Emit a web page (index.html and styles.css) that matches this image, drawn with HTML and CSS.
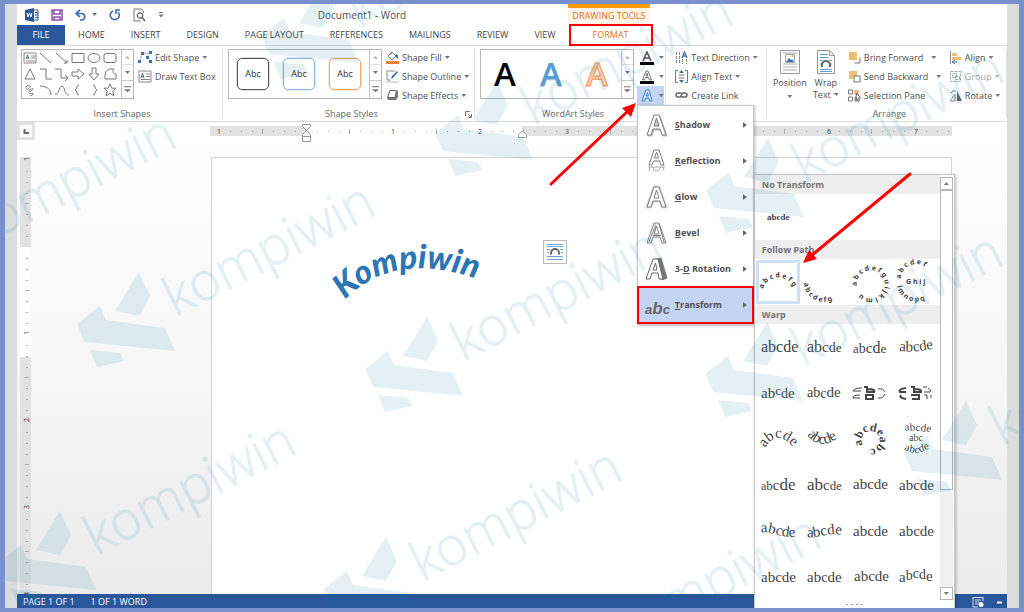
FILE: index.html
```html
<!DOCTYPE html>
<html lang="en">
<head>
<meta charset="utf-8">
<title>Document1 - Word</title>
<link rel="stylesheet" href="styles.css">
</head>
<body>
<svg class="defs" aria-hidden="true">
  <defs>
    <pattern id="hticks" width="87" height="10" patternUnits="userSpaceOnUse" x="96">
      <path d="M11.5 5v1M22.5 5v1M33.5 5v1M43.5 3v5M54.5 5v1M65.5 5v1M76.5 5v1" stroke="#aaa"/>
    </pattern>
    <pattern id="vticks" width="12" height="87" patternUnits="userSpaceOnUse" y="90">
      <path d="M6 11.5h2M6 22.5h2M6 33.5h2M5 43.5h4M6 54.5h2M6 65.5h2M6 76.5h2" stroke="#aaa"/>
    </pattern>
    <symbol id="mark" overflow="visible">
      <path d="M0 0 11 24 0 44-24 39ZM-39 34-33 48 26 56 36 79-54 70-62 52ZM-49 78-19 81-15 89-42 95Z"/>
      <text transform="translate(36 45) rotate(-27)">kompiwin</text>
    </symbol>
    <path id="arch" d="M8 30A16 16 0 0 1 38 28"/>
    <path id="arch-down" d="M3 24A19 19 0 0 0 43 22"/>
    <path id="ring" d="M10 27A14 14 0 1 1 13 34"/>
    <path id="btn-top" d="M8 20A15 15 0 0 1 38 20"/>
    <path id="btn-low" d="M4 27A19 17 0 0 0 43 23"/>
    <path id="w-arch" d="M10 32Q23 10 42 36"/>
    <path id="w-down" d="M6 19Q22 38 42 17"/>
    <path id="rise" d="M6 27Q24 29 44 24"/>
    <path id="wave1" d="M6 25C16 22 28 32 44 28"/>
    <path id="wave2" d="M6 29C16 31 26 24 44 27"/>
    <path id="w-ring" d="M16 29A9 9 0 1 1 24 33"/>
  </defs>
</svg>

<div class="window">
  <header class="titlebar">
    <div class="quick">
      <svg width="14" height="14" viewBox="0 0 14 14"><path d="M7 2h6v10H7M10 4.500h3M10 7h3M10 9.500h3" fill="#fff" stroke="#2a579a"/><path d="M0 2 9 0v14L0 12Z" fill="#2a579a"/><path d="m2 5 1 4 1.500-4L6 9l1-4" fill="none" stroke="#fff"/></svg>
      <button aria-label="Save"><svg width="12" height="12" viewBox="0 0 12 12"><path d="M1 1h10v10H1ZM3 1v4h6V1M3 11V8h6v3" fill="none" stroke="#8b4fb0" stroke-width="1.500"/></svg></button>
      <button aria-label="Undo"><svg width="12" height="12" viewBox="0 0 12 12"><path d="M5 1 1 4.500 5 8M1.500 4.500H7a3.300 3.300 0 0 1 0 6.500H5" fill="none" stroke="#3c70b5" stroke-width="1.700"/></svg><i class="caret"></i></button>
      <button aria-label="Redo"><svg width="12" height="12" viewBox="0 0 12 12"><path d="M4 2a4.500 4.500 0 1 0 5 1M7 5V1h4" fill="none" stroke="#3c70b5" stroke-width="1.600"/></svg></button>
      <button aria-label="Print preview"><svg width="13" height="14" viewBox="0 0 13 14"><path d="M10.500 5V3L8 1H1v12h7" fill="none" stroke="#777"/><circle cx="7" cy="7.500" r="2.700" fill="none" stroke="#666" stroke-width="1.300"/><path d="m9 9.500 3 3.500" stroke="#666" stroke-width="1.700"/></svg></button>
      <button aria-label="Customize"><svg width="6" height="6" viewBox="0 0 6 6"><path d="M1 .5h4" stroke="#777"/><path d="M.5 2.500h5L3 5.500Z" fill="#777"/></svg></button>
    </div>
    <h1>Document1 - Word</h1>
    <div class="context">DRAWING TOOLS</div>
  </header>

  <nav class="tabs">
    <button class="file">FILE</button>
    <button>HOME</button>
    <button>INSERT</button>
    <button>DESIGN</button>
    <button>PAGE LAYOUT</button>
    <button>REFERENCES</button>
    <button>MAILINGS</button>
    <button>REVIEW</button>
    <button>VIEW</button>
    <button class="format">FORMAT</button>
  </nav>

  <div class="ribbon">
    <section class="group g-insert">
      <div class="tools">
        <div class="gallery">
          <div class="shapes">
            <svg viewBox="0 0 16 16"><path d="M2 3h12v10H2ZM9 6h4M9 8h4M4 11h9" fill="none" stroke="#888"/><path d="m4 9 1.500-4L7 9M4.500 8h2" fill="none" stroke="#3c70b5"/></svg>
            <svg viewBox="0 0 16 16"><path d="m2 3 11 10"/></svg>
            <svg viewBox="0 0 16 16"><path d="m2 3 11 10M13 10v3h-3"/></svg>
            <svg viewBox="0 0 16 16"><path d="M2 3.500h12v9H2Z"/></svg>
            <svg viewBox="0 0 16 16"><ellipse cx="8" cy="8" rx="6" ry="4.500"/></svg>
            <svg viewBox="0 0 16 16"><rect x="2" y="3.500" width="12" height="9" rx="2"/></svg>
            <svg viewBox="0 0 16 16"><path d="m8 3 5 10H3Z"/></svg>
            <svg viewBox="0 0 16 16"><path d="M2 3h6v10h6"/></svg>
            <svg viewBox="0 0 16 16"><path d="M1 3h6v9h7M11 9l3 3-3 3"/></svg>
            <svg viewBox="0 0 16 16"><path d="M2 6h6V3l6 5-6 5v-3H2Z"/></svg>
            <svg viewBox="0 0 16 16"><path d="M6 2h4v6h3l-5 6-5-6h3Z"/></svg>
            <svg viewBox="0 0 16 16"><path d="M7 3h5c-2 2-1 5 2 5v5H3V9c0-3 2-5 4-6Z"/></svg>
            <svg viewBox="0 0 16 16"><path d="M5 7c-3-2 1-5 3-3 2 1-4 3-2 4s5-3 5-1-5 2-4 4 5-1 4 1-2 1-3 2"/></svg>
            <svg viewBox="0 0 16 16"><path d="M2 4c6 0 11 3 11 9"/></svg>
            <svg viewBox="0 0 16 16"><path d="M1 12c4 2 4-8 7-8s2 9 7 9"/></svg>
            <svg viewBox="0 0 16 16"><path d="M9 3q-2 0-2 2t-2 3q2 1 2 3t2 2"/></svg>
            <svg viewBox="0 0 16 16"><path d="M7 3q2 0 2 2t2 3q-2 1-2 3t-2 2"/></svg>
            <svg viewBox="0 0 16 16"><path d="m8 2 1.800 4.200H14l-3.300 3L12 14l-4-2.800L4 14l1.300-4.800L2 6.200h4.200Z"/></svg>
          </div>
          <div class="spin"><button aria-label="Up" disabled><i class="caret up"></i></button><button aria-label="Down"><i class="caret"></i></button><button aria-label="More"><i class="caret more"></i></button></div>
        </div>
        <div class="commands">
          <button><svg width="14" height="13" viewBox="0 0 14 13"><path d="m2 10 2-7 8-1-3 4 3 5" fill="none" stroke="#7a9cc8" stroke-dasharray="2 1"/><path d="M0 9h3v3H0ZM3 1h3v3H3ZM11 0h3v3h-3ZM8 5h3v3H8ZM11 9h3v3h-3Z" fill="#3c70b5"/></svg>Edit Shape<i class="caret"></i></button>
          <button><svg width="14" height="13" viewBox="0 0 14 13"><path d="M1 1h12v11H1ZM8 4h4M8 6.500h4M3 9.500h9" fill="none" stroke="#888"/><path d="m3 8 1.500-5L6 8M3.500 6.500h2" fill="none" stroke="#3c70b5"/></svg>Draw Text Box</button>
        </div>
      </div>
      <h2>Insert Shapes</h2>
    </section>

    <section class="group g-styles">
      <div class="tools">
        <div class="gallery">
          <div class="swatches"><button class="dark">Abc</button><button class="blue">Abc</button><button class="orange">Abc</button></div>
          <div class="spin"><button aria-label="Up" disabled><i class="caret up"></i></button><button aria-label="Down"><i class="caret"></i></button><button aria-label="More"><i class="caret more"></i></button></div>
        </div>
        <div class="commands">
          <button><svg width="13" height="13" viewBox="0 0 13 13"><path d="M0 10h13v3H0Z" fill="#ed7d31"/><path d="m6 1 4 4-4 4-4-4ZM5 4V1" fill="#fff" stroke="#777"/><path d="M10 3c2 0 2 2 2 5l-2-2Z" fill="#3c70b5"/></svg>Shape Fill<i class="caret"></i></button>
          <button><svg width="13" height="13" viewBox="0 0 13 13"><path d="M0 11h13v2H0Z" fill="#ddd"/><path d="M9 1H1v9h4" fill="none" stroke="#888"/><path d="m5 9 1-3 5-5 1 1-5 6Z" fill="#3c70b5"/></svg>Shape Outline<i class="caret"></i></button>
          <button><svg width="13" height="13" viewBox="0 0 13 13"><path d="M4 2h8v6l-2 3H2L1 9Z" fill="#777"/><path d="M4 1.500h6.500L9 8.500H1.500Z" fill="#fff" stroke="#666"/></svg>Shape Effects<i class="caret"></i></button>
        </div>
      </div>
      <h2>Shape Styles</h2>
      <button class="launcher" aria-label="Format shape"><svg width="7" height="7" viewBox="0 0 7 7"><path d="M.5 5V.5H5M3 3l3 3M6.500 3v3.500H3" fill="none" stroke="#777"/></svg></button>
    </section>

    <section class="group g-wordart">
      <div class="tools">
        <div class="gallery">
          <div class="letters"><button class="black">A</button><button class="blue">A</button><button class="orange">A</button></div>
          <div class="spin"><button aria-label="Up" disabled><i class="caret up"></i></button><button aria-label="Down"><i class="caret"></i></button><button aria-label="More"><i class="caret more"></i></button></div>
        </div>
        <div class="text-tools">
          <button aria-label="Text Fill"><svg width="14" height="14" viewBox="0 0 14 14"><path d="M0 11h14v3H0Z"/><path d="m3 10 4-9 4 9M4.500 7h5" fill="none" stroke="#555" stroke-width="1.600"/></svg><i class="caret"></i></button>
          <button aria-label="Text Outline"><svg width="14" height="14" viewBox="0 0 14 14"><path d="M0 11h14v3H0Z"/><path d="m2.500 10 3.500-9h2l3.500 9h-2l-1-2.500h-3l-1 2.500ZM6 6h2L7 3Z" fill="#fff" stroke="#777"/></svg><i class="caret"></i></button>
          <div class="effects">
            <button class="open" aria-label="Text Effects" aria-expanded="true"><svg width="14" height="14" viewBox="0 0 14 14"><path d="M2 12 6 1h3l3 11h-2.500L9 9H5.500l-1 3ZM6 7h2.500L7.500 3.500Z" fill="#e8f1fb" stroke="#3f7dc4"/></svg><i class="caret"></i></button>
            <div class="menu" role="menu">
              <button role="menuitem"><svg viewBox="0 0 24 24"><path class="sh" d="M3 23 10 3h5l7 20h-4l-2-6h-7l-2 6Z"/><path d="M2 22 9 2h5l7 20h-4l-2-6H8l-2 6ZM9 13h5L11.500 5Z"/></svg><span><u>S</u>hadow</span><i class="next"></i></button>
              <button role="menuitem"><svg viewBox="0 0 24 24"><path d="M4 16 9 1h5l5 15h-3l-1.500-4h-6L7 16ZM9.500 9h4l-2-6Z"/><path class="faded" d="M3 18h17M5 18l-1 4M8 18q0 4 3.500 4t3.500-4M18 18l1 4"/></svg><span><u>R</u>eflection</span><i class="next"></i></button>
              <button role="menuitem"><svg viewBox="0 0 24 24"><path class="glow" d="M2 22 9 2h5l7 20h-4l-2-6H8l-2 6Z"/><path d="M2 22 9 2h5l7 20h-4l-2-6H8l-2 6ZM9 13h5L11.500 5Z"/></svg><span><u>G</u>low</span><i class="next"></i></button>
              <button role="menuitem"><svg viewBox="0 0 24 24"><path d="M2 22 9 2h5l7 20h-4l-2-6H8l-2 6ZM9 13h5L11.500 5Z"/><path d="M4 21 11 3.500M14 3l5 18M8 14.500h8"/></svg><span><u>B</u>evel</span><i class="next"></i></button>
              <button role="menuitem"><svg viewBox="0 0 24 24"><path class="solid" d="m11 2 5-1 6 20-5 2Z"/><path class="face" d="M1 22 8 2h5l5 20h-4l-1-6H7l-2 6ZM8 13h4L10.500 6Z"/></svg><span>3-<u>D</u> Rotation</span><i class="next"></i></button>
              <div class="branch">
                <button role="menuitem" class="current" aria-expanded="true"><svg viewBox="0 0 24 24"><text class="abc" x="0" y="21">a<tspan font-size="17">b</tspan>c</text></svg><span><u>T</u>ransform</span><i class="next"></i></button>
                <div class="submenu">
                  <div class="picker">
                    <div class="list">
                      <h3>No Transform</h3>
                      <div class="cells plain"><button><svg viewBox="0 0 46 46"><text x="12" y="26">abcde</text></svg></button></div>
                      <h3>Follow Path</h3>
                      <div class="cells path">
                        <button class="selected"><svg viewBox="0 0 46 46"><text><textPath href="#arch">a b c d e f g</textPath></text></svg></button>
                        <button><svg viewBox="0 0 46 46"><text><textPath href="#arch-down">a b c d e f g</textPath></text></svg></button>
                        <button><svg viewBox="0 0 46 46"><text><textPath href="#ring">a b c d e f g u i j k l m u</textPath></text></svg></button>
                        <button><svg viewBox="0 0 46 46"><text><textPath href="#btn-top">a b c d e f</textPath></text><text x="13" y="25">G h i j</text><text><textPath href="#btn-low">l m n o p q</textPath></text></svg></button>
                      </div>
                      <h3>Warp</h3>
                      <div class="cells warp">
                        <button><svg viewBox="0 0 46 46"><text x="6" y="28" font-size="16">abcde</text></svg></button>
                        <button><svg viewBox="0 0 46 46"><text x="6" y="28" font-size="16">ab<tspan font-size="15">c</tspan><tspan font-size="14">d</tspan><tspan font-size="13">e</tspan></text></svg></button>
                        <button><svg viewBox="0 0 46 46"><text x="6" y="29" font-size="13">a<tspan font-size="14">b</tspan><tspan font-size="15">c</tspan><tspan font-size="16">d</tspan>e</text></svg></button>
                        <button><svg viewBox="0 0 46 46"><text font-size="15"><textPath href="#rise">abcde</textPath></text></svg></button>

                        <button><svg viewBox="0 0 46 46"><text x="6" y="28" font-size="15">ab<tspan font-size="13" dy="-3">c</tspan><tspan font-size="14" dy="3">d</tspan><tspan font-size="15">e</tspan></text></svg></button>
                        <button><svg viewBox="0 0 46 46"><text x="6" y="27" font-size="14">ab<tspan dy="1">c</tspan><tspan font-size="15" dy="-1">de</tspan></text></svg></button>
                        <button><svg viewBox="0 0 46 46"><g class="stretched"><path d="M15 18q-8 0-9 3h8M13 25q-8 0-7 3h7"/><path class="thick" d="M17 17h3v5h7q2-3-7-3M18 25h8v4h-7v-4"/><path d="M31 19q5-1 7 3M31 28q5 1 7-4"/></g></svg></button>
                        <button><svg viewBox="0 0 46 46"><g class="stretched"><path class="thick" d="M13 18q-8 1-6 4h6M8 25q-2 3 5 4M18 17h3v5h7q1-3-7-3M18 25h8v4h-7"/><path d="M30 17h4M31 22h6q2-2-2-4M31 25h3v4M38 25v3"/></g></svg></button>

                        <button><svg viewBox="0 0 46 46"><text font-size="15"><textPath href="#w-arch">abcde</textPath></text></svg></button>
                        <button><svg viewBox="0 0 46 46"><text font-size="15"><textPath href="#w-down">abcde</textPath></text></svg></button>
                        <button><svg viewBox="0 0 46 46"><text class="heavy" font-size="12"><textPath href="#w-ring">abcdeabc</textPath></text></svg></button>
                        <button><svg viewBox="0 0 46 46"><text font-size="11" x="12" y="15" rotate="-10 -5 0 8 15">abcde</text><text font-size="10" x="16" y="25">abc</text><text font-size="11" x="11" y="34 36 37 36 34" rotate="15 10 0 -10 -15">abcde</text></svg></button>

                        <button><svg viewBox="0 0 46 46"><text x="6" y="28" font-size="12">a<tspan font-size="13">b</tspan><tspan font-size="15">c</tspan><tspan font-size="17">de</tspan></text></svg></button>
                        <button><svg viewBox="0 0 46 46"><text x="6" y="28" font-size="17">ab<tspan font-size="15">c</tspan><tspan font-size="13">d</tspan><tspan font-size="12">e</tspan></text></svg></button>
                        <button><svg viewBox="0 0 46 46"><text x="6" y="27" font-size="15">abcde</text></svg></button>
                        <button><svg viewBox="0 0 46 46"><text x="6" y="28" font-size="15">abcde</text></svg></button>

                        <button><svg viewBox="0 0 46 46"><text font-size="15"><textPath href="#wave1">abcde</textPath></text></svg></button>
                        <button><svg viewBox="0 0 46 46"><text font-size="15"><textPath href="#wave2">abcde</textPath></text></svg></button>
                        <button><svg viewBox="0 0 46 46"><text x="6" y="28" font-size="15">abcde</text></svg></button>
                        <button><svg viewBox="0 0 46 46"><text x="6" y="28" font-size="15">abcde</text></svg></button>

                        <button><svg viewBox="0 0 46 46"><text x="6" y="28" font-size="15">abcde</text></svg></button>
                        <button><svg viewBox="0 0 46 46"><text x="6" y="28" font-size="15">ab<tspan font-size="14">c</tspan>de</text></svg></button>
                        <button><svg viewBox="0 0 46 46"><text x="7" y="27" font-size="15">abcde</text></svg></button>
                        <button><svg viewBox="0 0 46 46"><text x="6" y="28 26 24 25 27" font-size="15">a<tspan font-size="14">bcd</tspan>e</text></svg></button>
                      </div>
                    </div>
                    <div class="scroll"><button aria-label="Scroll up"><i class="caret up"></i></button><div class="thumb"></div><button class="down" aria-label="Scroll down"><i class="caret"></i></button></div>
                  </div>
                  <div class="grip"><i></i><i></i><i></i><i></i></div>
                </div>
              </div>
            </div>
          </div>
        </div>
      </div>
      <h2>WordArt Styles</h2>
    </section>

    <section class="group g-text">
      <div class="tools">
        <div class="commands">
          <button><svg width="13" height="13" viewBox="0 0 13 13"><path d="M1.500 1v12M4.500 1v12M7.500 8v5M11.500 8v5" stroke="#888" stroke-dasharray="3 1"/><path d="m7 7 2.500-6L12 7M8 5h3" fill="none" stroke="#3c70b5" stroke-width="1.300"/></svg>Text Direction<i class="caret"></i></button>
          <button><svg width="13" height="13" viewBox="0 0 13 13"><path d="M3 .5H.5v12H3M10 .5h2.500v12H10M3.500 5h6M3.500 8h6" fill="none" stroke="#777"/><path d="M6.500 0 9 3H4ZM6.500 13 9 10H4Z" fill="#3c70b5"/></svg>Align Text<i class="caret"></i></button>
          <button><svg width="13" height="13" viewBox="0 0 13 13"><path d="M6 8H3Q1 8 1 6t2-2h2q2 0 2 2M7 4h3q2 0 2 2t-2 2H8Q6 8 6 6" fill="none" stroke="#666" stroke-width="1.500"/></svg>Create Link</button>
        </div>
      </div>
      <h2>Text</h2>
    </section>

    <section class="group g-arrange">
      <div class="tools">
        <button class="big"><svg width="20" height="24" viewBox="0 0 20 24"><path d="M.5.500h19v23H.5Z" fill="#fff" stroke="#999"/><path d="M3 3h14M3 14h14M3 17h14M3 20h14" stroke="#aaa"/><path d="M5.500 4.500h9v8h-9Z" fill="#fff" stroke="#aaa"/><path d="m6 12 3-4 2 2 1-1 2 3Z" fill="#3c70b5"/><circle cx="12.500" cy="6" r="1" fill="#f3b35c"/></svg><span>Position</span><i class="caret"></i></button>
        <button class="big"><svg width="18" height="24" viewBox="0 0 18 24"><path d="M.5.500h12l5 5v18H.5Z" fill="#fff" stroke="#999"/><path d="M12.500.500v5h5" fill="none" stroke="#999"/><path d="M3 4.500h8M3 7.500h8M3 10.500h3M12 10.500h3M3 14h2M13 14h2M3 19.500h12M3 21.500h12" stroke="#5b9bd5"/><path d="M5 17v-2a4 4 0 0 1 8 0v2" fill="none" stroke="#666" stroke-width="2"/></svg><span>Wrap<br>Text<i class="caret"></i></span></button>
        <div class="commands order">
          <button><svg width="13" height="13" viewBox="0 0 13 13"><path d="M12 6.500V12H6.500" fill="none" stroke="#777"/><path d="M1 1h8v8H1Z" fill="#edbe76"/></svg><span>Bring Forward</span><i class="caret"></i></button>
          <button><svg width="13" height="13" viewBox="0 0 13 13"><path d="M1 1h8v8H1Z" fill="#edbe76"/><path d="M6 6h6v6H6Z" fill="#fff" stroke="#777"/></svg><span>Send Backward</span><i class="caret"></i></button>
          <button><svg width="13" height="13" viewBox="0 0 13 13"><path d="M.5 1h4v4h-4ZM.5 8h4v4h-4ZM7 8h2v4H7Z" fill="#fff" stroke="#777"/><path d="M6 1h5v5H6Z" fill="#f3b98a"/><path d="m8.500 4 4 5h-2l1 3-1.500.500L9 9.500 8 11Z" fill="#fff" stroke="#666"/></svg><span>Selection Pane</span></button>
        </div>
        <div class="commands">
          <button><svg width="13" height="13" viewBox="0 0 13 13"><path d="M1.500 0v13" stroke="#888"/><path d="M3 2h5v3H3ZM3 6h9v3H3Z" fill="#edbe76"/><path d="M3 11h5M6 9l-3 2 3 2" fill="none" stroke="#3c70b5"/></svg>Align<i class="caret"></i></button>
          <button disabled><svg width="13" height="13" viewBox="0 0 13 13"><path d="M1.500 1.500h10v10h-10ZM3.500 3.500h4v4h-4ZM6.500 6.500h4v3h-4Z" fill="none" stroke="#aaa" stroke-dasharray="3 1"/></svg>Group<i class="caret"></i></button>
          <button><svg width="13" height="13" viewBox="0 0 13 13"><path d="M1 12h5V5Z" fill="none" stroke="#888"/><path d="M8 2v10h5Z" fill="#666"/><path d="M2 4q1-3 5-2" fill="none" stroke="#3c70b5"/></svg>Rotate<i class="caret"></i></button>
        </div>
      </div>
      <h2>Arrange</h2>
    </section>
  </div>

  <main class="workspace">
    <div class="hruler">
      <svg width="100%" height="10"><rect width="100%" height="10" fill="#e2e2e2"/><rect x="96" width="216" height="10" fill="#fff"/><rect width="100%" height="10" fill="url(#hticks)"/>
        <g class="nums"><text x="9" y="8">1</text><text x="183" y="8">1</text><text x="270" y="8">2</text><text x="357" y="8">3</text><text x="444" y="8">4</text><text x="531" y="8">5</text><text x="619" y="8">6</text><text x="706" y="8">7</text></g>
        </svg>
      <svg class="indent" width="9" height="18" viewBox="0 0 9 18"><path d="M.5.500h8v2l-4 4-4-4ZM4.500 6.500l4 4v2h-8v-2ZM.5 12.500h8v5h-8Z" fill="#fff" stroke="#999"/></svg>
      <svg class="right-indent" width="9" height="8" viewBox="0 0 9 8"><path d="m4.500 1 4 3.500v3h-8v-3Z" fill="#fff" stroke="#999"/></svg>
    </div>
    <button class="tabstop" aria-label="Left tab"><svg width="12" height="12" viewBox="0 0 12 12"><path fill="#fff" d="M0 0h12v12H0Z"/><path d="M4.500 4v4H9" fill="none" stroke="#666" stroke-width="2"/></svg></button>
    <div class="vruler"><svg width="11" height="100%"><rect width="11" height="100%" fill="#e2e2e2"/><rect y="90" width="11" height="110" fill="#fff"/><rect width="11" height="100%" fill="url(#vticks)"/>
      <g class="nums"><text transform="translate(9 2) rotate(-90)">1</text><text transform="translate(9 176) rotate(-90)">1</text><text transform="translate(9 263) rotate(-90)">2</text><text transform="translate(9 350) rotate(-90)">3</text><text transform="translate(9 437) rotate(-90)">4</text></g></svg></div>
    <div class="page">
      <svg class="wordart" width="170" height="80" viewBox="0 0 170 80"><path id="bend" d="M19 70Q72 16 164 54" fill="none"/><text><textPath href="#bend">Kompiwin</textPath></text></svg>
      <button class="layout" aria-label="Layout Options"><svg width="18" height="18" viewBox="0 0 18 18"><path d="M1 1.500h16M1 3.500h16M1 6.500h3M14 6.500h3M1 9.500h2M15 9.500h2M1 13.500h16M1 16.500h16" stroke="#6fa3d3"/><path d="M5 11.500V10a4 4 0 0 1 8 0v1.500" fill="none" stroke="#666" stroke-width="2"/></svg></button>
    </div>
  </main>

  <footer class="status">
    <span>PAGE 1 OF 1</span><span>1 OF 1 WORD</span>
    <div class="views"><svg width="12" height="12" viewBox="0 0 12 12"><path d="M1 1.500h10M1 1v10h5M3 4h6M3 6h4M3 8h3M11 1v4" fill="none" stroke="#cfdcf0"/><circle cx="9" cy="8.500" r="2.500" fill="#fff"/></svg><svg width="6" height="12" viewBox="0 0 6 12"><path d="M0 6.500h5" stroke="#fff" stroke-width="2"/></svg></div>
  </footer>
</div>

<svg class="overlay watermark" aria-hidden="true">
  <use href="#mark" x="-60" y="204"/><use href="#mark" x="139" y="272"/><use href="#mark" x="427" y="317"/><use href="#mark" x="386" y="537"/><use href="#mark" x="60" y="511"/><use href="#mark" x="768" y="138"/><use href="#mark" x="767" y="322"/><use href="#mark" x="966" y="401"/><use href="#mark" x="323" y="-16"/><use href="#mark" x="497" y="81"/><use href="#mark" x="585" y="604"/>
</svg>
<svg class="overlay arrows" aria-hidden="true">
  <path d="M551 184 629 110M910 174 811 256"/>
  <path class="head" d="M636 103 622 108 631 117ZM803 263 809 250 817 259Z"/>
</svg>
</body>
</html>
```
FILE: styles.css
```css
* { box-sizing: border-box; }
body {
  margin: 0;
  min-height: 100vh;
  display: flex;
  position: relative;
  border: 5px solid #7891cc;
  border-width: 4px 5px;
  background: #dadddc;
  color: #505050;
  font: 9px/12px "Open Sans", "Noto Sans", sans-serif;
  overflow: hidden;
}
button {
  margin: 0;
  padding: 0;
  border: 0;
  background: none;
  color: inherit;
  font: inherit;
  display: flex;
  align-items: center;
  white-space: nowrap;
}
h1, h2, h3 { margin: 0; font-weight: 400; font-size: 9px; }
svg { display: block; flex: none; }
.defs { position: absolute; width: 0; height: 0; }

.caret {
  width: 5px;
  height: 3px;
  background: #777;
  clip-path: polygon(0 0, 100% 0, 50% 100%);
  flex: none;
}
.caret.up { clip-path: polygon(0 100%, 50% 0, 100% 100%); }
.caret.more { height: 6px; width: 7px; clip-path: polygon(0 0, 100% 0, 100% 1px, 0 1px, 0 3px, 100% 3px, 50% 100%, 0 3px); }

.window {
  flex: 1;
  margin: 0 12px;
  display: flex;
  flex-direction: column;
  background: #fff;
}

.titlebar { display: flex; height: 21px; }
.quick { width: 228px; padding-left: 8px; display: flex; align-items: center; gap: 12px; }
.quick button { gap: 5px; }
.titlebar h1 { width: 234px; font-size: 10px; line-height: 22px; text-align: center; }
.context {
  margin-left: 89px;
  width: 82px;
  border-top: 4px solid #ff9a00;
  background: #fef3e6;
  color: #d9722b;
  line-height: 15px;
  text-align: center;
}

.tabs { display: flex; height: 20px; color: #444; }
.tabs button { padding: 0 13px; }
.tabs .file { width: 48px; justify-content: center; padding: 0; background: #2a579a; color: #fff; }
.tabs .format {
  width: 84px;
  margin: -1px 0;
  padding: 0;
  justify-content: center;
  color: #d9722b;
  outline: 2px solid #f00;
  outline-offset: -2px;
  z-index: 1;
}

.ribbon { display: flex; height: 77px; border-top: 1px solid #dadada; border-bottom: 1px solid #dadada; }
.group {
  display: grid;
  grid-template-rows: 1fr 14px;
  padding: 3px 0 0 5px;
  min-width: 0;
  position: relative;
}
.group::after { content: ""; position: absolute; right: 0; top: 3px; bottom: 3px; width: 1px; background: #e2e2e2; }
.group h2 { text-align: center; line-height: 14px; color: #666; }
.g-insert { flex: 207; padding-left: 4px; }
.g-styles { flex: 253; }
.g-wordart { flex: 191; }
.g-text { flex: 98; }
.g-arrange { flex: 241; }
.tools { display: flex; align-items: flex-start; gap: 4px; min-height: 0; }
.launcher { position: absolute; right: 3px; bottom: 3px; }

.gallery { display: flex; height: 50px; border: 1px solid #b5b5b5; }
.shapes { display: grid; grid-template-columns: repeat(6, 16px); grid-auto-rows: 16px; padding-right: 3px; }
.shapes svg { fill: none; stroke: #777; }
.spin { width: 12px; display: grid; border-left: 1px solid #c5c5c5; }
.spin button { justify-content: center; border-bottom: 1px solid #c5c5c5; }
.spin button:last-child { border: 0; }
.spin button:disabled { opacity: .5; }
.swatches { display: flex; align-items: center; gap: 14px; padding: 0 8px; }
.swatches button { width: 32px; height: 32px; justify-content: center; border: 1px solid #555; border-radius: 5px; background: #fff; color: #333; outline: 1px solid #55555530; }
.swatches .blue { border-color: #8db4e2; outline-color: #8db4e240; }
.swatches .orange { border-color: #f4a468; outline-color: #f4a46840; }
.letters { display: flex; align-items: center; padding: 0 1px; }
.letters button { width: 46px; height: 46px; justify-content: center; font-size: 33px; font-weight: 600; color: #000; line-height: 40px; }
.letters .blue { color: #5b9bd5; text-shadow: 0 1px 1px #5b9bd580; }
.letters .orange { color: #f8cbad; -webkit-text-stroke: 1px #ee9a64; }

.commands { display: grid; grid-auto-rows: 19px; justify-items: start; margin-top: -1px; }
.commands button { gap: 3px; }
.commands button:disabled { color: #aaa; }
.commands button:disabled .caret { background: #bbb; }
.g-arrange .tools { gap: 0; }
.order { width: 97px; margin-left: 4px; margin-right: 4px; }
.order .caret { margin-left: 5px; }
.g-text .commands { margin-left: 4px; }
.text-tools { display: grid; grid-auto-rows: 19px; margin-left: -1px; margin-top: -1px; }
.text-tools button { height: 19px; width: 27px; gap: 5px; padding-left: 3px; }
.text-tools .open { background: #c3d5f2; }
.big { flex-direction: column; width: 36px; gap: 3px; justify-content: flex-start; line-height: 12px; padding-top: 1px; }
.big .caret { display: inline-block; margin: 1px 0 2px 3px; }
.big > .caret { margin: 3px 0 0; }

.effects { position: relative; }
.menu {
  position: absolute;
  z-index: 5;
  top: 19px;
  left: 0;
  width: 117px;
  padding: 1px 0;
  border: 1px solid #c6c6c6;
  background: #fff;
  box-shadow: 1px 1px 3px #0004;
  font-weight: 700;
}
.text-tools .menu [role=menuitem] { width: 100%; height: 36px; padding: 0 6px 0 7px; gap: 6px; }
.menu [role=menuitem] > svg { width: 24px; height: 24px; fill: #fff; stroke: #7b7b7b; stroke-width: 1; fill-rule: evenodd; overflow: visible; }
.menu .sh { fill: #ccc; stroke: #bbb; }
.menu .glow { fill: none; stroke: #ddd; stroke-width: 3; }
.menu .faded { fill: none; stroke: #aaa; }
.menu .solid { fill: #777; }
.menu .face { stroke: #666; }
.menu .abc { fill: #666; stroke: none; font: italic 700 13px "Liberation Sans", sans-serif; }
.menu span { flex: 1; text-align: left; white-space: nowrap; }
.next { width: 4px; height: 6px; background: #666; clip-path: polygon(0 0, 100% 50%, 0 100%); }
.text-tools .menu .current { background: #c3d5f2; outline: 2px solid #f00; outline-offset: -1px; }
.branch { position: relative; }

.submenu {
  position: absolute;
  left: calc(100% + 1px);
  bottom: -287px;
  width: 201px;
  border: 1px solid #c6c6c6;
  background: #fff;
  box-shadow: 1px 1px 3px #0004;
  font-weight: 400;
}
.picker { display: flex; justify-content: space-between; padding-right: 1px; }
.list { width: 185px; }
.list h3 { height: 19px; padding-left: 7px; line-height: 20px; background: #eee; font-weight: 700; color: #737373; }
.cells { display: grid; grid-template-columns: repeat(4, 46px); grid-auto-rows: 46px; }
.text-tools .cells button { width: 46px; height: 46px; padding: 0; }
.cells svg { width: 46px; height: 46px; fill: #444; }
.plain text { font: 700 9px "Liberation Serif", serif; }
.path text { font: 700 7px "Noto Sans", sans-serif; }
.warp text { font-family: "Liberation Serif", serif; }
.warp .heavy { font-weight: 700; }
.stretched { fill: none; stroke: #444; stroke-width: 1; }
.stretched .thick { stroke-width: 2; }
.cells .selected { outline: 3px solid #cfe0f5; outline-offset: -4px; }
.scroll { width: 13px; margin-top: 2px; display: flex; flex-direction: column; background: #f0f0f0; }
.text-tools .scroll button { width: 13px; height: 13px; padding: 0; justify-content: center; border: 1px solid #b5b5b5; background: #fff; }
.thumb { height: 300px; border: 1px solid #b5b5b5; background: #fff; }
.scroll .down { margin-top: auto; }
.grip { display: flex; justify-content: center; gap: 3px; height: 9px; align-items: center; }
.grip i { width: 2px; height: 1px; background: #999; }

.workspace {
  flex: 1;
  display: grid;
  grid-template: 35px 1fr / 194px 1fr;
  padding-right: 55px;
  background: linear-gradient(#fff, #f5f5f5 60%, #ebebeb);
  position: relative;
}
.tabstop { grid-area: 1 / 1; align-self: start; width: 18px; height: 18px; background: #e2e2e2; justify-content: center; }
.hruler { grid-area: 1 / 2; position: relative; padding-top: 4px; margin-left: -1px; }
.indent { position: absolute; left: 92px; top: 2px; }
.right-indent { position: absolute; left: 308px; top: 8px; }
.nums { font: 7px "Noto Sans", sans-serif; fill: #444; text-anchor: middle; }
.vruler { grid-area: 2 / 1; margin-left: 3px; position: relative; }
.vruler svg { position: absolute; height: 100%; }
.page { position: relative; border: 1px solid #d4d4d4; border-bottom: 0; background: #fff; }
.wordart { position: absolute; left: 114px; top: 72px; overflow: visible; }
.wordart text { font: italic 900 33px Lato, sans-serif; fill: #2e75b6; }
.layout { position: absolute; left: 331px; top: 82px; width: 24px; height: 24px; justify-content: center; border: 1px solid #bbb; background: #fff; }

.status { height: 14px; display: flex; align-items: center; gap: 16px; padding: 2px 0 0 6px; background: #2a579a; color: #fff; }
.views { margin-left: auto; display: flex; gap: 13px; padding-right: 4px; }

.overlay { position: absolute; z-index: 10; top: -4px; left: -5px; width: calc(100% + 10px); height: calc(100% + 8px); pointer-events: none; }
.watermark { fill: #00739b; opacity: .1; font: 300 53px "Open Sans", sans-serif; }
.watermark text, #mark text { stroke: #00739b; stroke-width: 1; }
.arrows { fill: none; stroke: #f00; stroke-width: 3; stroke-linecap: round; }
.arrows .head { fill: #f00; stroke: none; }
```
